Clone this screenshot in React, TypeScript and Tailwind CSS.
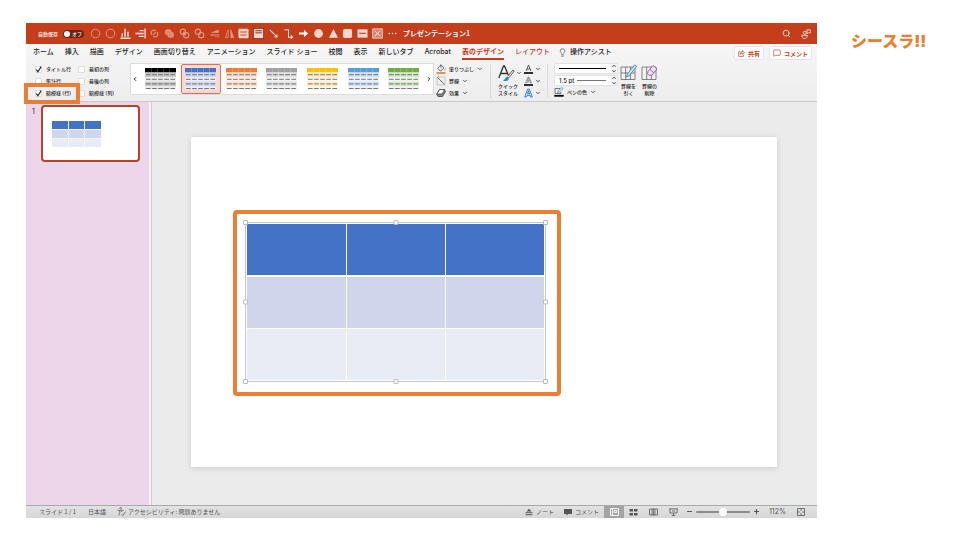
import type { ReactNode } from 'react'
import { ChevronDown, ChevronLeft, ChevronRight, Lightbulb, MessageSquare, Minus, Plus, Search } from 'lucide-react'

const tabs = [
  'ホーム',
  '挿入',
  '描画',
  'デザイン',
  '画面切り替え',
  'アニメーション',
  'スライド ショー',
  '校閲',
  '表示',
  '新しいタブ',
  'Acrobat',
  '表のデザイン',
  'レイアウト',
]

const tableStyles = [
  { name: '黒', head: '#000000', odd: '#c9c9c9', even: '#e9e9e9' },
  { name: '青', head: '#4472c4', odd: '#d0d8ee', even: '#eaeef8' },
  { name: 'オレンジ', head: '#ed7d31', odd: '#fadccb', even: '#fdf0e8' },
  { name: '灰色', head: '#a0a0a0', odd: '#dedede', even: '#f1f1f1' },
  { name: '黄', head: '#ffc000', odd: '#ffeac6', even: '#fff6e5' },
  { name: '水色', head: '#5b9bd5', odd: '#d2e0f2', even: '#ebf2fa' },
  { name: '緑', head: '#70ad47', odd: '#d4e5cb', even: '#ecf4e8' },
]

const quickTools: { name: string; art: ReactNode }[] = [
  { name: '元に戻す', art: <circle cx="6" cy="6" r="4.700" opacity=".6" /> },
  { name: 'やり直し', art: <circle cx="6" cy="6" r="4.700" opacity=".6" /> },
  { name: '下揃え', art: <path d="M.5 11.200h11M2.500 9.500V6M5.500 9.500V.8M8.700 9.500V4" strokeWidth="1.600" /> },
  { name: '右揃え', art: <path d="M11 .5v11M5 2.800h4.500M.5 6h9M4 9.200h5.500" strokeWidth="1.400" /> },
  {
    name: '型抜き',
    art: (
      <path
        d="M7.500 3.200A3 3 0 1 0 3.200 7.500M4.500 8.800A3 3 0 1 0 8.800 4.500M4.500 7.500l3-3"
        opacity=".5"
        strokeWidth="1.300"
      />
    ),
  },
  {
    name: '接合',
    art: (
      <g opacity=".5" fill="#fbd6cb" stroke="none">
        <circle cx="4.600" cy="4.600" r="3.600" />
        <circle cx="7.400" cy="7.400" r="3.600" />
      </g>
    ),
  },
  {
    name: '重なり抽出',
    art: (
      <g opacity=".5" strokeWidth="1.300">
        <circle cx="4.200" cy="4.200" r="2.900" />
        <circle cx="7.800" cy="7.800" r="2.900" />
        <circle cx="6" cy="6" r="1.500" fill="#fff" />
      </g>
    ),
  },
  {
    name: '単純型抜き',
    art: (
      <g opacity=".5" strokeWidth="1.300">
        <circle cx="4.200" cy="4.200" r="2.900" />
        <circle cx="7.800" cy="7.800" r="2.900" />
        <path d="m4.500 7.500 3-3" />
      </g>
    ),
  },
  {
    name: '左右反転',
    art: (
      <g opacity=".5">
        <path d="M10.500 2 1.500 5.300h9z" fill="#fff" stroke="none" />
        <path d="M1.500 7.300h9v2.500z" strokeWidth=".8" />
      </g>
    ),
  },
  {
    name: '上下反転',
    art: (
      <g opacity=".5">
        <path d="M4.500 2v8.500H1.500z" />
        <path d="M7.500 2v8.500h3z" fill="#fff" />
      </g>
    ),
  },
  {
    name: '中央に配置',
    art: (
      <>
        <rect x=".5" y=".8" width="11" height="10.400" rx="1" fill="#fbd6cb" stroke="none" />
        <path d="M2.500 4.300h7M2.500 7.700h7" stroke="#c43e1c" strokeWidth="1.200" />
      </>
    ),
  },
  {
    name: '上に配置',
    art: (
      <>
        <rect x=".3" y=".3" width="11.400" height="11.400" fill="#fbd6cb" stroke="#6b2a1b" strokeWidth="1" />
        <path d="M2.500 3h7M2.500 5.300h7" stroke="#6b2a1b" strokeWidth="1" />
      </>
    ),
  },
  { name: '直線', art: <path d="m2 2 7.500 7.500M9.800 7v2.800H7" strokeWidth="1.100" /> },
  { name: 'コネクタ', art: <path d="M1.500 2H6v8h4M8.500 8l2 2-2 1.800" strokeWidth="1.100" /> },
  { name: '矢印', art: <path d="M1 4.800h5.500V2L11 6l-4.500 4V7.200H1z" fill="#fff" stroke="none" /> },
  { name: '円', art: <circle cx="6" cy="6" r="4.800" fill="#fbd6cb" stroke="none" /> },
  { name: '三角形', art: <path d="m6 1.200 5 9.300H1z" fill="#fbd6cb" stroke="none" /> },
  { name: '角丸四角形', art: <rect x="1" y="1" width="10" height="10" rx="2" fill="#fbd6cb" stroke="none" /> },
  {
    name: 'テキスト ボックス',
    art: (
      <>
        <rect x=".5" y="1.500" width="11" height="9" fill="#fbd6cb" stroke="none" />
        <path d="M2.500 5.800h7" stroke="#c43e1c" strokeWidth="1.200" />
      </>
    ),
  },
  {
    name: '図のプレースホルダー',
    art: (
      <>
        <rect x=".8" y="1" width="10.400" height="10" fill="#dd7b62" />
        <path d="m3 3 6 6M9 3 3 9" strokeWidth="1.100" />
      </>
    ),
  },
  {
    name: 'その他',
    art: (
      <g fill="#fff" stroke="none">
        <circle cx="2.500" cy="6" r=".9" />
        <circle cx="6" cy="6" r=".9" />
        <circle cx="9.500" cy="6" r=".9" />
      </g>
    ),
  },
]

const slideRows = ['bg-[#4472c4]', 'bg-[#cfd5ea]', 'bg-[#e9ebf5]']

const handles = [
  '-left-[3px] -top-[3px]',
  'left-1/2 -translate-x-1/2 -top-[3px]',
  '-right-[3px] -top-[3px]',
  '-left-[3px] top-1/2 -translate-y-1/2',
  '-right-[3px] top-1/2 -translate-y-1/2',
  '-left-[3px] -bottom-[3px]',
  'left-1/2 -translate-x-1/2 -bottom-[3px]',
  '-right-[3px] -bottom-[3px]',
]

function Check({ label, checked = false }: { label: string; checked?: boolean }) {
  return (
    <label className="flex h-3 items-center gap-1">
      <span className="grid size-[7px] place-items-center">
        <input
          type="checkbox"
          defaultChecked={checked}
          className="peer col-start-1 row-start-1 size-[7px] appearance-none rounded-[1px] border border-[#dcdcdc] bg-white"
        />
        <svg
          viewBox="0 0 7 7"
          className="pointer-events-none col-start-1 row-start-1 hidden size-[7px] peer-checked:block"
          fill="none"
          stroke="#222"
          strokeWidth="1.100"
        >
          <path d="m1.200 3.500 1.700 2.200L6.200.6" />
        </svg>
      </span>
      {label}
    </label>
  )
}

function StyleThumb({ head, odd, even }: { head: string; odd: string; even: string }) {
  return (
    <svg viewBox="0 0 31 22" className="h-[22px] w-[31px]">
      <rect width="31" height="4.500" fill={head} />
      {[0, 1, 2, 3].map((r) => (
        <g key={r}>
          <rect y={4.5 + r * 4.6} width="31" height={r < 3 ? 4.6 : 3} fill={r % 2 ? even : odd} />
          <path
            d={`M1 ${6.7 + r * 4.6}h29`}
            stroke="#4a4a4a"
            strokeWidth=".9"
            strokeDasharray="4.600 1.500"
            opacity=".8"
          />
        </g>
      ))}
      <path d="M6.500 0v4.500M12.500 0v4.500M18.500 0v4.500M24.500 0v4.500" stroke="#fff" strokeWidth=".4" opacity=".5" />
    </svg>
  )
}

function MenuButton({ label, children }: { label: string; children: ReactNode }) {
  return (
    <button className="flex h-3 items-center gap-[3px]">
      {children}
      {label}
      <ChevronDown className="size-[6px]" strokeWidth={3} />
    </button>
  )
}

function Stepper() {
  return (
    <svg viewBox="0 0 6 10" className="ml-auto h-[9px] w-[6px] bg-[#f4f4f4]" fill="none" stroke="#333" strokeWidth=".9">
      <path d="m1.200 3.200 1.800-2 1.800 2M1.200 6.800l1.800 2 1.800-2" />
    </svg>
  )
}

function Divider() {
  return <div className="mt-px h-[34px] w-px bg-[#d9d9d9]" />
}

function TitleBar() {
  return (
    <header className="flex h-[21px] items-center bg-[#c43e1c] pl-3 pr-[6px] font-['Noto_Sans_CJK_JP',sans-serif] text-white">
      <label className="flex items-center gap-[5px] text-[5px] font-medium">
        自動保存
        <button role="switch" aria-checked="false" className="flex h-2 w-[21px] items-center gap-[2px] rounded-full bg-[#6b2413] px-px text-[5px]">
          <span className="size-[6px] rounded-full bg-white" />
          オフ
        </button>
      </label>
      <div className="ml-[6px] flex w-[308px] items-center justify-between">
        {quickTools.map((tool) => (
          <button key={tool.name} aria-label={tool.name}>
            <svg viewBox="0 0 12 12" className="size-[11px]" fill="none" stroke="#fde9e3" strokeWidth=".9">
              {tool.art}
            </svg>
          </button>
        ))}
      </div>
      <h1 className="ml-[5px] text-[7px] font-bold">プレゼンテーション1</h1>
      <div className="ml-auto flex items-center gap-[10px]">
        <button aria-label="検索">
          <Search className="size-[9px]" strokeWidth={2} />
        </button>
        <button aria-label="共同編集者">
          <svg viewBox="0 0 12 12" className="size-[10px]" fill="none" stroke="#fff" strokeWidth=".9">
            <circle cx="4.500" cy="4.500" r="1.800" />
            <path d="M1 7.500h6.500c0 2.500-1.200 4-3.200 4S1 10 1 7.500zM7 1h4.300v3.500H9L7.500 6z" />
          </svg>
        </button>
      </div>
    </header>
  )
}

function TabBar() {
  return (
    <nav className="flex h-[18px] items-start pl-[7px] pr-[5px] text-[7px] font-medium">
      <div className="flex gap-[11px]">
        {tabs.map((tab) => (
          <a
            key={tab}
            href="#"
            className={
              tab === '表のデザイン'
                ? 'whitespace-nowrap border-y-2 border-t-transparent border-b-[#c43e1c] leading-3 text-[#c43e1c] font-bold'
                : tab === 'レイアウト'
                  ? 'whitespace-nowrap border-y-2 border-transparent leading-3 text-[#c43e1c]'
                  : 'whitespace-nowrap border-y-2 border-transparent leading-3'
            }
          >
            {tab}
          </a>
        ))}
      </div>
      <button className="ml-2 flex h-4 items-center gap-[3px] whitespace-nowrap">
        <Lightbulb className="size-[9px]" strokeWidth={1.5} />
        操作アシスト
      </button>
      <div className="ml-auto flex gap-[5px] pt-[2px] text-[6px] font-bold text-[#c43e1c]">
        <button className="flex h-[14px] w-[30px] items-center justify-center gap-[3px] rounded-[2px] border border-[#e4e4e4] bg-white">
          <svg viewBox="0 0 8 8" className="size-[7px]" fill="none" stroke="currentColor" strokeWidth=".8">
            <path d="M3 2H.7v5.300h5.600V5.500M2.500 5c0-2 1-2.800 2.600-2.800V.8L7.500 3 5.100 5V3.700C4 3.700 3.200 4 2.500 5z" />
          </svg>
          共有
        </button>
        <button className="flex h-[14px] w-[43px] items-center justify-center gap-[3px] rounded-[2px] border border-[#e4e4e4] bg-white">
          <MessageSquare className="size-2" strokeWidth={2} />
          コメント
        </button>
      </div>
    </nav>
  )
}

function Ribbon() {
  return (
    <div className="flex h-10 items-start whitespace-nowrap border-b border-[#c9c9c9] pl-[9px] pt-px text-[5px] font-medium leading-[7px]">
      <div className="flex w-[89px] justify-between">
        <div className="w-[43px]">
          <Check label="タイトル行" checked />
          <Check label="集計行" />
          <div className="relative">
            <Check label="縞模様 (行)" checked />
            <span className="pointer-events-none absolute -left-[11px] -top-1 z-10 h-[21px] w-14 border-4 border-[#e97f35]" />
          </div>
        </div>
        <div className="w-[46px]">
          <Check label="最初の列" />
          <Check label="最後の列" />
          <Check label="縞模様 (列)" />
        </div>
      </div>

      <div className="ml-[6px] flex h-8 w-[304px] items-center border border-[#dcdcdc] bg-white">
        <button aria-label="前へ" className="w-[9px] pl-px">
          <ChevronLeft className="size-[6px]" strokeWidth={4} />
        </button>
        <div className="flex flex-1 justify-between">
          {tableStyles.map((style) => (
            <button
              key={style.name}
              aria-label={style.name}
              className={
                style.name === '青'
                  ? 'flex h-[30px] w-10 items-center justify-center rounded-[2px] border border-[#e0705a] bg-[#fbd9d2]'
                  : 'flex h-[30px] w-10 items-center justify-center'
              }
            >
              <StyleThumb head={style.head} odd={style.odd} even={style.even} />
            </button>
          ))}
        </div>
        <button aria-label="次へ" className="flex w-[9px] justify-center">
          <ChevronRight className="size-[6px]" strokeWidth={4} />
        </button>
      </div>

      <div className="ml-[2px] w-[54px]">
        <MenuButton label="塗りつぶし">
          <svg viewBox="0 0 10 10" className="size-[10px]" fill="none" stroke="#444" strokeWidth=".8">
            <path d="m5 .8 3 3-3.400 3.400-3-3zM5 .8v3" />
            <path d="M9 4.500v2" stroke="#3a96dd" />
            <path d="M.5 9h9" stroke="#e8762d" strokeWidth="1.600" />
          </svg>
        </MenuButton>
        <MenuButton label="罫線">
          <svg viewBox="0 0 10 10" className="size-[10px]" fill="none" stroke="#555" strokeWidth=".8">
            <path d="M1 1h8v8H1z" stroke="#aaa" strokeWidth=".6" />
            <path d="m1.500 1.500 7 7" />
          </svg>
        </MenuButton>
        <MenuButton label="効果">
          <svg viewBox="0 0 10 10" className="size-[10px]" fill="#fff" stroke="#444" strokeWidth=".8">
            <path d="M3.500 1.500h5l1 2-3 5H2l-1.300-2z" fill="#888" />
            <path d="M3.500 1.500h5l-2.300 4.500H.8z" />
          </svg>
        </MenuButton>
      </div>
      <Divider />

      <button className="ml-[7px] w-6 text-left">
        <span className="flex h-5 items-center gap-px">
          <svg viewBox="0 0 17 18" className="h-[18px] w-[17px] shrink-0" fill="none" stroke="#333" strokeWidth="1.300">
            <path d="M.8 14 5.500 2h1L10.300 11M2.500 9.500h7" />
            <path d="m9.500 12.500 5.500-6.500 1.200 1-5.200 6.700" fill="#fff" strokeWidth=".8" />
            <path d="M5 16.500c2 0 2-3.700 4.300-3.700 2 0 2.400 3.700-.8 4.200-1.500.2-2.800 0-3.500-.5z" fill="#2b88d8" stroke="none" />
          </svg>
          <ChevronDown className="size-[6px] shrink-0" strokeWidth={3} />
        </span>
        クイック
        <br />
        スタイル
      </button>
      <div className="ml-[2px] w-[23px]">
        <button aria-label="文字の塗りつぶし" className="flex h-3 items-center gap-[2px]">
          <svg viewBox="0 0 9 10" className="h-[10px] w-[9px]" fill="none" stroke="#333" strokeWidth=".8">
            <path d="M2 7 4.500 1 7 7M3 5h3" />
            <path d="M0 9h9" stroke="#000" strokeWidth="1.600" />
          </svg>
          <ChevronDown className="size-[6px]" strokeWidth={3} />
        </button>
        <button aria-label="文字の輪郭" className="flex h-3 items-center gap-[2px]">
          <svg viewBox="0 0 9 10" className="h-[10px] w-[9px]" fill="none" stroke="#777" strokeWidth=".7">
            <path d="M1.500 7 4 1h1l2.500 6H6.300L6 5.800H3L2.700 7zM3.500 4.500h2L4.500 2z" />
            <path d="M0 9h9" stroke="#000" strokeWidth="1.600" />
          </svg>
          <ChevronDown className="size-[6px]" strokeWidth={3} />
        </button>
        <button aria-label="文字の効果" className="flex h-3 items-center gap-[2px]">
          <svg viewBox="0 0 9 10" className="h-[10px] w-[9px]" fill="#cfe6f8" stroke="#2b7cd3" strokeWidth=".9">
            <path d="M.7 9 3.700 1h1.600l3 8H6.500L6 7.300H3L2.500 9zM3.500 5.600h2l-1-3z" />
          </svg>
          <ChevronDown className="size-[6px]" strokeWidth={3} />
        </button>
      </div>
      <Divider />

      <div className="ml-[6px] w-[64px]">
        <button aria-label="ペンのスタイル" className="mb-px flex h-[11px] w-full items-center border border-[#e2e2e2] bg-white pl-1">
          <span className="h-px w-[47px] bg-black" />
          <Stepper />
        </button>
        <label className="flex h-[11px] w-full items-center border border-[#e2e2e2] bg-white pl-1 text-[6px]">
          <select aria-label="ペンの太さ" className="w-[18px] appearance-none bg-transparent">
            <option>1.5 pt</option>
          </select>
          <span className="h-px w-[29px] bg-[#777]" />
          <Stepper />
        </label>
        <MenuButton label="ペンの色">
          <svg viewBox="0 0 10 10" className="size-[10px]" fill="none" stroke="#444" strokeWidth=".7">
            <path d="M6 1.500H1v5h6V5" />
            <path d="m3.500 5.500.5-1.700L8 .5l1 1-3.800 3.600z" stroke="#2b88d8" />
            <path d="M.3 8.800h9.400" stroke="#000" strokeWidth="1.800" />
          </svg>
        </MenuButton>
      </div>

      <button className="ml-[2px] w-[17px] text-center">
        <svg viewBox="0 0 17 18" className="mb-[2px] h-[18px] w-[17px]" fill="none" stroke="#555" strokeWidth=".7">
          <path d="M1 4h14v12.500H1zM1 10h14M5.700 4v12.500M10.400 4v12.500" />
          <path d="m6.500 14 1-3L14.500 2l2 1.500-7.300 9.200z" fill="#d9ecfa" stroke="#2b88d8" strokeWidth=".9" />
        </svg>
        罫線を
        <br />
        引く
      </button>
      <button className="ml-1 w-[17px] text-center">
        <svg viewBox="0 0 17 18" className="mb-[2px] h-[18px] w-[17px]" fill="none" stroke="#555" strokeWidth=".7">
          <path d="M1 4h14v12.500H1zM5.700 4v12.500M10.400 4v12.500" />
          <path d="m7 8.500 5-6 4 3.500-5 6-3 .3-1.500-1.500zM9 6.500l4 3.500" fill="#f5e6fa" stroke="#a349b8" strokeWidth=".9" />
        </svg>
        罫線の
        <br />
        削除
      </button>
    </div>
  )
}

function SlideList() {
  return (
    <aside className="flex w-[123px] shrink-0 gap-[5px] bg-[#edd6ea] pl-[6px] pt-[3px] text-[7px]">
      <span className="w-1 pt-[2px] leading-[10px]">1</span>
      <button aria-label="スライド 1" className="h-[57px] w-[99px] rounded-[4px] border-2 border-[#b5432a] bg-white">
        <span className="ml-[9px] grid w-[49px] grid-cols-3 gap-px bg-[#f4f5fa]">
          {slideRows.map((color) =>
            [0, 1, 2].map((cell) => <span key={color + cell} className={`h-2 ${color}`} />),
          )}
        </span>
      </button>
    </aside>
  )
}

function Canvas() {
  return (
    <main className="min-w-0 flex-1 border-l border-[#cfcfcf] bg-[#ebebeb] pb-[38px] pl-[39px] pr-10 pt-[35px]">
      <div className="aspect-video bg-white pl-[42px] pt-[73px] shadow-[0_1px_6px_rgba(0,0,0,0.14)]">
        <div className="w-[328px] rounded-[4px] border-4 border-[#e97f35] pb-[10px] pl-2 pr-[11px] pt-2">
          <div className="relative border border-[#c3c6cc] p-px">
            <table className="w-full table-fixed border-collapse">
              <tbody>
                {slideRows.map((color, i) => (
                  <tr key={color}>
                    {[0, 1, 2].map((cell) => (
                      <td
                        key={cell}
                        className={`h-[52px] border-white p-0 ${color} ${cell ? 'border-l' : ''} ${i === 1 ? 'border-t-2' : i ? 'border-t' : ''}`}
                      />
                    ))}
                  </tr>
                ))}
              </tbody>
            </table>
            {handles.map((place) => (
              <span key={place} className={`absolute size-[5px] rounded-[1px] border border-[#b5b9c0] bg-white ${place}`} />
            ))}
          </div>
        </div>
      </div>
    </main>
  )
}

function StatusBar() {
  return (
    <footer className="flex h-[13px] items-center whitespace-nowrap border-t border-[#a9a9a9] bg-linear-to-b from-[#e2e2e2] to-[#d6d6d6] pl-[13px] pr-3 font-['Noto_Sans_CJK_JP',sans-serif] text-[6px] text-[#555]">
      <span>スライド 1 / 1</span>
      <button className="ml-3">日本語</button>
      <button className="ml-[11px] flex items-center gap-[2px]">
        <svg viewBox="0 0 10 10" className="size-[9px]" fill="none" stroke="currentColor" strokeWidth=".8">
          <circle cx="4" cy="1.500" r="1" />
          <path d="M.5 3.500 3 4v2L2 9.500M7.500 3.500 5 4v1.500M3 4h2M5 8l1.500 1.500L9.500 5" />
        </svg>
        アクセシビリティ: 問題ありません
      </button>
      <div className="ml-auto flex h-full items-center">
        <button className="flex items-center gap-[3px]">
          <svg viewBox="0 0 8 8" className="size-2" fill="currentColor">
            <path d="M4 .8 6.500 3.500h-5zM.5 4.300h7v1h-7zM.5 6.300h7v1h-7z" />
          </svg>
          ノート
        </button>
        <button className="ml-[10px] flex items-center gap-[3px]">
          <svg viewBox="0 0 8 8" className="size-2" fill="currentColor">
            <path d="M0 1h8v5H4L2.500 7.800V6H0z" />
          </svg>
          コメント
        </button>
        <button aria-label="標準" className="ml-[5px] flex h-full w-5 items-center justify-center bg-[#a3a3a3]">
          <svg viewBox="0 0 9 8" className="h-2 w-[9px]" fill="none" stroke="#fff" strokeWidth=".9">
            <path d="M.5.5h8v7h-8zM2.500.5v7M4.300 2.500h2.500v2H4.300z" />
          </svg>
        </button>
        <button aria-label="スライド一覧" className="ml-[5px]">
          <svg viewBox="0 0 9 8" className="h-2 w-[9px]" fill="currentColor">
            <path d="M.5 1H4v2.500H.5zM5 1h3.500v2.500H5zM.5 5H4v2.500H.5zM5 5h3.500v2.500H5z" />
          </svg>
        </button>
        <button aria-label="閲覧表示" className="ml-[11px]">
          <svg viewBox="0 0 9 8" className="h-2 w-[9px]" fill="none" stroke="currentColor" strokeWidth=".8">
            <path d="M.5 1h8v6h-8zM3 1v6M4.500 1v6M6 1v6" />
          </svg>
        </button>
        <button aria-label="スライド ショー" className="ml-[11px]">
          <svg viewBox="0 0 9 8" className="h-2 w-[9px]" fill="none" stroke="currentColor" strokeWidth=".8">
            <path d="M0 .9h9M1 1v4h7V1M4.500 5v2.500M2.800 7.500h3.400M3 3h3" />
          </svg>
        </button>
        <button aria-label="縮小" className="ml-2">
          <Minus className="size-[7px]" strokeWidth={4} />
        </button>
        <input
          type="range"
          aria-label="ズーム"
          min="10"
          max="214"
          defaultValue="112"
          className="ml-[3px] h-[9px] w-[54px] appearance-none bg-transparent [&::-webkit-slider-runnable-track]:h-[2px] [&::-webkit-slider-runnable-track]:rounded-full [&::-webkit-slider-runnable-track]:bg-[#8c8c8c] [&::-webkit-slider-thumb]:-mt-[3px] [&::-webkit-slider-thumb]:size-2 [&::-webkit-slider-thumb]:appearance-none [&::-webkit-slider-thumb]:rounded-full [&::-webkit-slider-thumb]:bg-white"
        />
        <button aria-label="拡大" className="ml-[3px]">
          <Plus className="size-[7px]" strokeWidth={4} />
        </button>
        <button className="ml-[9px] w-[17px] text-left font-['Inter',sans-serif] text-[7px] leading-none">112%</button>
        <button aria-label="ウィンドウに合わせる" className="ml-[11px]">
          <svg viewBox="0 0 8 8" className="size-2" fill="none" stroke="currentColor" strokeWidth=".8">
            <path d="M.5.5h7v7h-7zM4 .5v2.300M4 5.200v2.300M.5 4h2.300M5.200 4h2.300" />
          </svg>
        </button>
      </div>
    </footer>
  )
}

export default function App() {
  return (
    <div className="flex min-h-screen items-start bg-white pl-[26px] pt-[23px] font-['Inter','Noto_Sans_CJK_JP',sans-serif] text-[#262626]">
      <div className="min-w-0 flex-1">
        <TitleBar />
        <div className="bg-linear-to-b from-[#f7f6f7] to-[#eeedee]">
          <TabBar />
          <Ribbon />
        </div>
        <div className="flex">
          <SlideList />
          <div className="w-[2px] bg-[#f7f1f6]" />
          <Canvas />
        </div>
        <StatusBar />
      </div>
      <div className="w-[143px] shrink-0 pl-[34px] pt-1 text-[16px] font-black leading-7 text-[#e97f35]">シースラ!!</div>
    </div>
  )
}
